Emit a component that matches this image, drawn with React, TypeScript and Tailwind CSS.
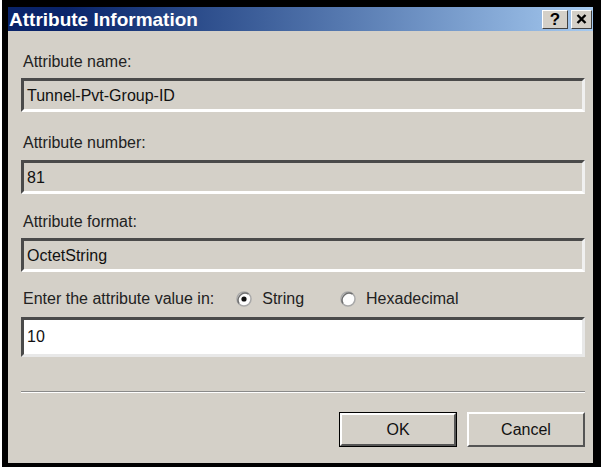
import React from "react";

const font = { fontFamily: '"Liberation Sans", Arial, sans-serif' };

function ReadOnlyField({ value }: { value: string }) {
  return (
    <div className="h-[34px] mr-[8px] ml-[13px] border-[3px] border-t-[#4a4a4a] border-l-[#4a4a4a] border-b-white border-r-[#f0f0f0] bg-[#d4d0c8] flex items-center pl-[3px] pt-[1px] text-[16px] text-[#111]">
      {value}
    </div>
  );
}

function Label({ children }: { children: React.ReactNode }) {
  return <div className="ml-[15px] h-[20px] leading-[20px] text-[16px] text-[#222]">{children}</div>;
}

function Radio({ checked }: { checked: boolean }) {
  return (
    <svg width="16" height="16" viewBox="0 0 16 16" className="shrink-0">
      <circle cx="8" cy="8" r="7" fill="#fdfdfd" stroke="#a8a8a8" strokeWidth="1.5" />
      <path d="M3 12.5 A7 7 0 0 1 12.5 3" fill="none" stroke="#707070" strokeWidth="1.5" />
      {checked && <circle cx="8" cy="8" r="2.6" fill="#111" />}
    </svg>
  );
}

function CaptionButton({ width, children }: { width: string; children: React.ReactNode }) {
  return (
    <div
      className={`${width} h-[19px] bg-[#d4d0c8] border border-t-white border-l-white border-b-[#404040] border-r-[#404040] flex items-center justify-center`}
    >
      {children}
    </div>
  );
}

export default function App() {
  return (
    <div className="w-[604px] h-[470px] bg-white pl-[2px] pr-[3px] pb-[3px]" style={font}>
      <div className="h-full bg-black pt-[7px] pl-[6px] pr-[8px] pb-[4px] flex flex-col">
        {/* title bar */}
        <div className="h-[24px] shrink-0 bg-linear-to-r from-[#0a246a] from-10% to-[#a6caf0] flex items-center pr-[1px]">
          <span className="pl-[1px] text-white font-bold text-[19px] leading-none">
            Attribute Information
          </span>
          <div className="ml-auto flex gap-[3px]">
            <CaptionButton width="w-[26px]">
              <span className="text-[17px] font-bold leading-none text-black">?</span>
            </CaptionButton>
            <CaptionButton width="w-[21px]">
              <svg width="11" height="10" viewBox="0 0 11 10">
                <path d="M1.5 1 L9.5 9 M9.5 1 L1.5 9" stroke="#000" strokeWidth="2.4" />
              </svg>
            </CaptionButton>
          </div>
        </div>

        {/* dialog body */}
        <div className="flex-1 bg-[#d4d0c8] pt-[21px] flex flex-col">
          <Label>Attribute name:</Label>
          <div className="mt-[6px]">
            <ReadOnlyField value="Tunnel-Pvt-Group-ID" />
          </div>

          <div className="mt-[21px]">
            <Label>Attribute number:</Label>
          </div>
          <div className="mt-[7px]">
            <ReadOnlyField value="81" />
          </div>

          <div className="mt-[18px]">
            <Label>Attribute format:</Label>
          </div>
          <div className="mt-[6px]">
            <ReadOnlyField value="OctetString" />
          </div>

          <div className="mt-[17px] ml-[15px] h-[20px] flex items-center text-[16px] text-[#222]">
            <span>Enter the attribute value in:</span>
            <div className="ml-[22px] flex items-center gap-[10px]">
              <Radio checked />
              <span>String</span>
            </div>
            <div className="ml-[36px] flex items-center gap-[10px]">
              <Radio checked={false} />
              <span>Hexadecimal</span>
            </div>
          </div>

          <div className="mt-[8px] h-[40px] mr-[8px] ml-[13px] border-[3px] border-t-[#4a4a4a] border-l-[#4a4a4a] border-b-[#e8e8e8] border-r-[#e8e8e8] bg-white flex items-center pl-[3px] text-[16px] text-[#111]">
            10
          </div>

          <div className="mt-[34px] mr-[8px] ml-[13px] border-t border-t-[#8a8a8a] border-b border-b-white" />

          <div className="mt-[19px] mr-[8px] flex justify-end gap-[10px]">
            <div className="w-[118px] h-[35px] border border-black">
              <div className="w-full h-full border-2 border-t-white border-l-white border-b-[#555] border-r-[#555] bg-[#d4d0c8] flex items-center justify-center text-[16px] text-[#111]">
                OK
              </div>
            </div>
            <div className="w-[118px] h-[35px] border-2 border-t-white border-l-white border-b-[#555] border-r-[#555] bg-[#d4d0c8] flex items-center justify-center text-[16px] text-[#111]">
              Cancel
            </div>
          </div>
        </div>
      </div>
    </div>
  );
}
